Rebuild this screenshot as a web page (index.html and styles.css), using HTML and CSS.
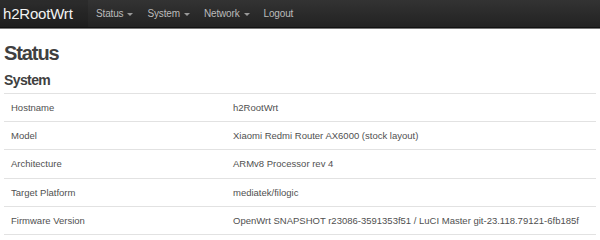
FILE: index.html
```html
<!DOCTYPE html>
<html>
<head>
<meta charset="utf-8">
<link rel="stylesheet" href="styles.css">
</head>
<body>
<header class="navbar">
  <a class="brand">h2RootWrt</a>
  <ul class="nav">
    <li><a>Status <span class="caret"></span></a></li>
    <li><a>System <span class="caret"></span></a></li>
    <li><a>Network <span class="caret"></span></a></li>
    <li><a>Logout</a></li>
  </ul>
</header>
<main class="container">
  <h2 class="title">Status</h2>
  <h3 class="section">System</h3>
  <div class="table">
    <div class="tr"><div class="td left">Hostname</div><div class="td">h2RootWrt</div></div>
    <div class="tr"><div class="td left">Model</div><div class="td">Xiaomi Redmi Router AX6000 (stock layout)</div></div>
    <div class="tr"><div class="td left">Architecture</div><div class="td">ARMv8 Processor rev 4</div></div>
    <div class="tr"><div class="td left">Target Platform</div><div class="td">mediatek/filogic</div></div>
    <div class="tr"><div class="td left">Firmware Version</div><div class="td">OpenWrt SNAPSHOT r23086-3591353f51 / LuCI Master git-23.118.79121-6fb185f</div></div>
  </div>
</main>
</body>
</html>
```
FILE: styles.css
```css
html, body { margin: 0; padding: 0; background: #fff; }
body { font-family: "Liberation Sans", Arial, sans-serif; color: #404040; }
.navbar {
  display: flex;
  align-items: stretch;
  height: 27px;
  background: linear-gradient(#333, #222);
  border-bottom: 1px solid #111;
  box-shadow: 0 1px 0 #777;
}
.brand {
  display: flex;
  align-items: center;
  width: 85px;
  padding-left: 3px;
  font-size: 15px;
  letter-spacing: -0.2px;
  color: #f2f2f2;
  background: rgba(0,0,0,0.12);
}
.nav { display: flex; list-style: none; margin: 0; padding: 0 0 0 1px; }
.nav li a {
  display: flex;
  align-items: center;
  height: 100%;
  padding: 0 7px;
  font-size: 10px;
  letter-spacing: -0.15px;
  color: #bbb;
}
.caret {
  display: inline-block;
  width: 0; height: 0;
  margin-left: 4px;
  margin-top: 1px;
  border-left: 3px solid transparent;
  border-right: 3px solid transparent;
  border-top: 3px solid #999;
}
.container { padding: 0 4px; }
.title { margin: 13px 0 0 0; font-size: 20px; line-height: 24px; letter-spacing: -1.1px; font-weight: bold; color: #404040; }
.section { margin: 6px 0 0 0; font-size: 14px; line-height: 18px; letter-spacing: -0.6px; font-weight: bold; color: #404040; padding-bottom: 4px; border-bottom: 1px solid #e2e2e2; }
.tr { display: flex; height: 27.2px; align-items: center; border-bottom: 1px solid #e2e2e2; font-size: 9.5px; color: #505050; white-space: nowrap; }
.td.left { width: 222px; flex: none; padding-left: 7px; }
```
